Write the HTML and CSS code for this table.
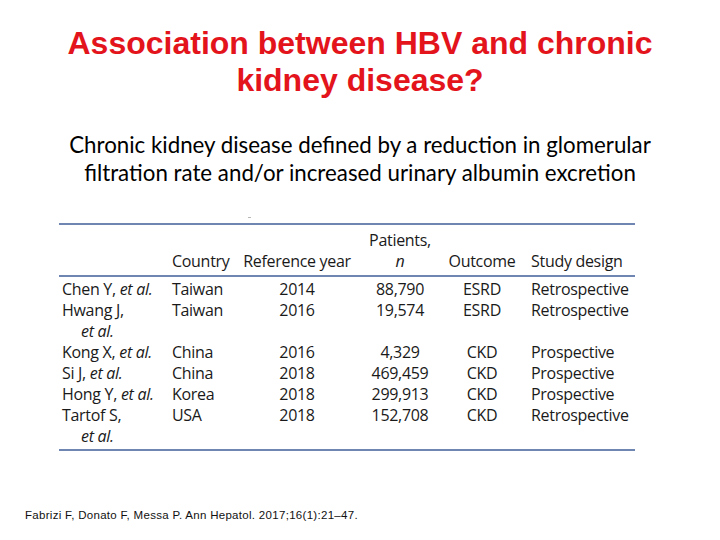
FILE: index.html
```html
<!DOCTYPE html>
<html>
<head>
<meta charset="utf-8">
<link rel="stylesheet" href="styles.css">
</head>
<body>
<div class="slide">
  <h1 class="title">Association between HBV and chronic<br>kidney disease?</h1>
  <p class="subtitle">Chronic kidney disease defined by a reduction in glomerular<br>filtration rate and/or increased urinary albumin excretion</p>
  <div class="table-wrap">
    <span class="mark"></span>
    <div class="grid">
      <div class="th"></div>
      <div class="th">Country</div>
      <div class="th c">Reference year</div>
      <div class="th c">Patients,<br><i>n</i></div>
      <div class="th c">Outcome</div>
      <div class="th">Study design</div>

      <div class="td first">Chen Y, <i>et al.</i></div>
      <div class="td first">Taiwan</div>
      <div class="td first c">2014</div>
      <div class="td first c">88,790</div>
      <div class="td first c">ESRD</div>
      <div class="td first">Retrospective</div>

      <div class="td">Hwang J,<br><i class="ind">et al.</i></div>
      <div class="td">Taiwan</div>
      <div class="td c">2016</div>
      <div class="td c">19,574</div>
      <div class="td c">ESRD</div>
      <div class="td">Retrospective</div>

      <div class="td">Kong X, <i>et al.</i></div>
      <div class="td">China</div>
      <div class="td c">2016</div>
      <div class="td c">4,329</div>
      <div class="td c">CKD</div>
      <div class="td">Prospective</div>

      <div class="td">Si J, <i>et al.</i></div>
      <div class="td">China</div>
      <div class="td c">2018</div>
      <div class="td c">469,459</div>
      <div class="td c">CKD</div>
      <div class="td">Prospective</div>

      <div class="td">Hong Y, <i>et al.</i></div>
      <div class="td">Korea</div>
      <div class="td c">2018</div>
      <div class="td c">299,913</div>
      <div class="td c">CKD</div>
      <div class="td">Prospective</div>

      <div class="td last">Tartof S,<br><i class="ind">et al.</i></div>
      <div class="td last">USA</div>
      <div class="td last c">2018</div>
      <div class="td last c">152,708</div>
      <div class="td last c">CKD</div>
      <div class="td last">Retrospective</div>
    </div>
  </div>
  <p class="cite">Fabrizi F, Donato F, Messa P. Ann Hepatol. 2017;16(1):21–47.</p>
</div>
</body>
</html>
```
FILE: styles.css
```css
html, body {
  margin: 0;
  padding: 0;
  background: #ffffff;
}
.slide {
  width: 720px;
  height: 540px;
  display: flex;
  flex-direction: column;
  align-items: center;
  overflow: hidden;
}
.title {
  margin: 25px 0 0;
  font-family: "Liberation Sans", Arial, sans-serif;
  font-weight: bold;
  font-size: 32px;
  line-height: 37px;
  color: #e3141b;
  text-align: center;
}
.subtitle {
  margin: 32px 0 0;
  font-family: Lato, "Open Sans", sans-serif;
  font-size: 22.3px;
  line-height: 28px;
  color: #000;
  text-align: center;
}
.table-wrap {
  position: relative;
  align-self: flex-start;
  margin: 36px 0 0 59px;
  width: 576px;
}
.mark {
  position: absolute;
  left: 189px;
  top: -6px;
  width: 3px;
  height: 1px;
  background: #b8b8b8;
}
.grid {
  display: grid;
  grid-template-columns: 110px 69px 118px 88px 76px 115px;
  border-top: 2px solid #6f86b3;
  border-bottom: 2px solid #6f86b3;
  font-family: "Open Sans", sans-serif;
  font-size: 16px;
  letter-spacing: -0.3px;
  line-height: 21px;
  color: #1a1a1a;
}
.th {
  padding: 5px 0 3px;
  border-bottom: 2px solid #6f86b3;
  display: flex;
  flex-direction: column;
  justify-content: flex-end;
}
.th.c { align-items: center; }
.grid > div:nth-child(6n+1) { padding-left: 3px; }
.grid > div:nth-child(6n+2) { padding-left: 3px; }
.grid > div:nth-child(6n) { padding-left: 11px; }
.td.first { padding-top: 2px; }
.td.last { padding-bottom: 2px; }
.c { text-align: center; }
.ind { padding-left: 19px; }
i { font-style: italic; }
.cite {
  align-self: flex-start;
  margin: 57px 0 0 25px;
  font-family: "Liberation Sans", Arial, sans-serif;
  font-size: 11.5px;
  line-height: 14px;
  letter-spacing: 0.3px;
  color: #111;
}
```
